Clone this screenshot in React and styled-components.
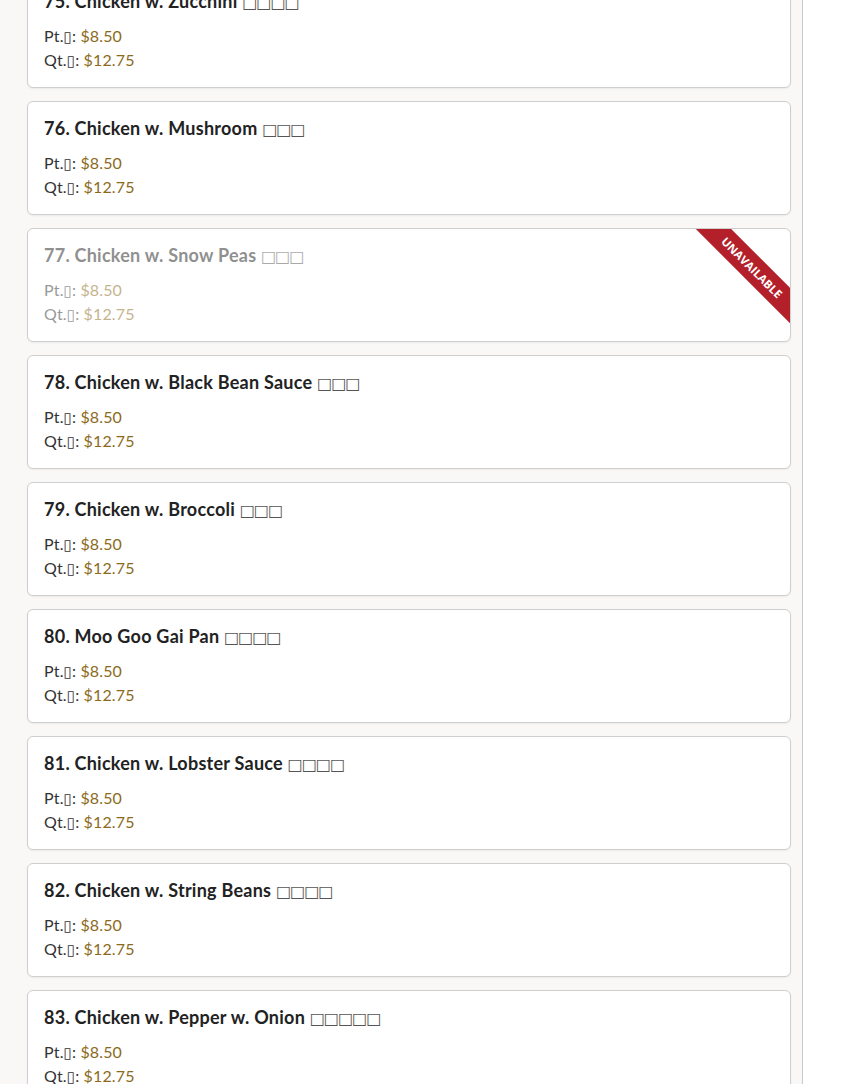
import React from 'react'
import styled, { createGlobalStyle } from 'styled-components'

const GlobalStyle = createGlobalStyle`
  html, body {
    margin: 0;
    padding: 0;
    background: #ffffff;
    overflow: hidden;
  }
  body {
    font-family: 'Lato', 'Open Sans', sans-serif;
  }
`

const items = [
  { no: 75, name: 'Chicken w. Zucchini', cn: 4 },
  { no: 76, name: 'Chicken w. Mushroom', cn: 3 },
  { no: 77, name: 'Chicken w. Snow Peas', cn: 3, unavailable: true },
  { no: 78, name: 'Chicken w. Black Bean Sauce', cn: 3 },
  { no: 79, name: 'Chicken w. Broccoli', cn: 3 },
  { no: 80, name: 'Moo Goo Gai Pan', cn: 4 },
  { no: 81, name: 'Chicken w. Lobster Sauce', cn: 4 },
  { no: 82, name: 'Chicken w. String Beans', cn: 4 },
  { no: 83, name: 'Chicken w. Pepper w. Onion', cn: 5 },
]

export default function App() {
  return (
    <>
      <GlobalStyle />
      <Column>
        <List>
          {items.map(item => (
            <Card key={item.no}>
              <Body $dim={item.unavailable}>
                <Title>
                  {item.no}. {item.name} <Missing>{'□'.repeat(item.cn)}</Missing>
                </Title>
                <PriceLine>
                  Pt.<Tofu>▯</Tofu>: <Price>$8.50</Price>
                </PriceLine>
                <PriceLine>
                  Qt.<Tofu>▯</Tofu>: <Price>$12.75</Price>
                </PriceLine>
              </Body>
              {item.unavailable && <Ribbon>Unavailable</Ribbon>}
            </Card>
          ))}
        </List>
      </Column>
    </>
  )
}

const Column = styled.div`
  width: 803px;
  height: 1084px;
  box-sizing: border-box;
  background: #f9f8f6;
  border-right: 1px solid #c9c9c9;
  padding: 0 11px 0 27px;
  overflow: hidden;
`

const List = styled.div`
  display: flex;
  flex-direction: column;
  gap: 13px;
  margin-top: -26px;
`

const Card = styled.div`
  position: relative;
  overflow: hidden;
  height: 114px;
  box-sizing: border-box;
  background: #ffffff;
  border: 1px solid #cfcfcf;
  border-radius: 6px;
  box-shadow: 0 1px 2px rgba(0, 0, 0, 0.06);
`

const Body = styled.div`
  padding: 15px 16px 16px;
  opacity: ${p => (p.$dim ? 0.5 : 1)};
`

const Title = styled.div`
  font-size: 18px;
  line-height: 22px;
  font-weight: 700;
  letter-spacing: 0.25px;
  color: #222222;
  margin-bottom: 10px;
  white-space: nowrap;
`

const Missing = styled.span`
  font-family: 'DejaVu Sans', sans-serif;
  font-weight: 400;
  font-size: 16px;
  letter-spacing: -1px;
  color: #555555;
`

const PriceLine = styled.div`
  font-size: 16px;
  line-height: 24px;
  height: 24px;
  letter-spacing: 0.15px;
  color: #333333;
`

const Tofu = styled.span`
  font-family: 'DejaVu Sans', sans-serif;
  font-size: 15px;
  line-height: 0;
`

const Price = styled.span`
  color: #8c6a1c;
`

const Ribbon = styled.div`
  position: absolute;
  top: 26px;
  right: -37px;
  width: 150px;
  height: 25px;
  transform: rotate(45deg);
  background: #b3202a;
  color: #ffffff;
  font-family: 'Open Sans', sans-serif;
  font-size: 11.5px;
  font-weight: 700;
  line-height: 25px;
  text-align: center;
  text-transform: uppercase;
  letter-spacing: 0px;
`
